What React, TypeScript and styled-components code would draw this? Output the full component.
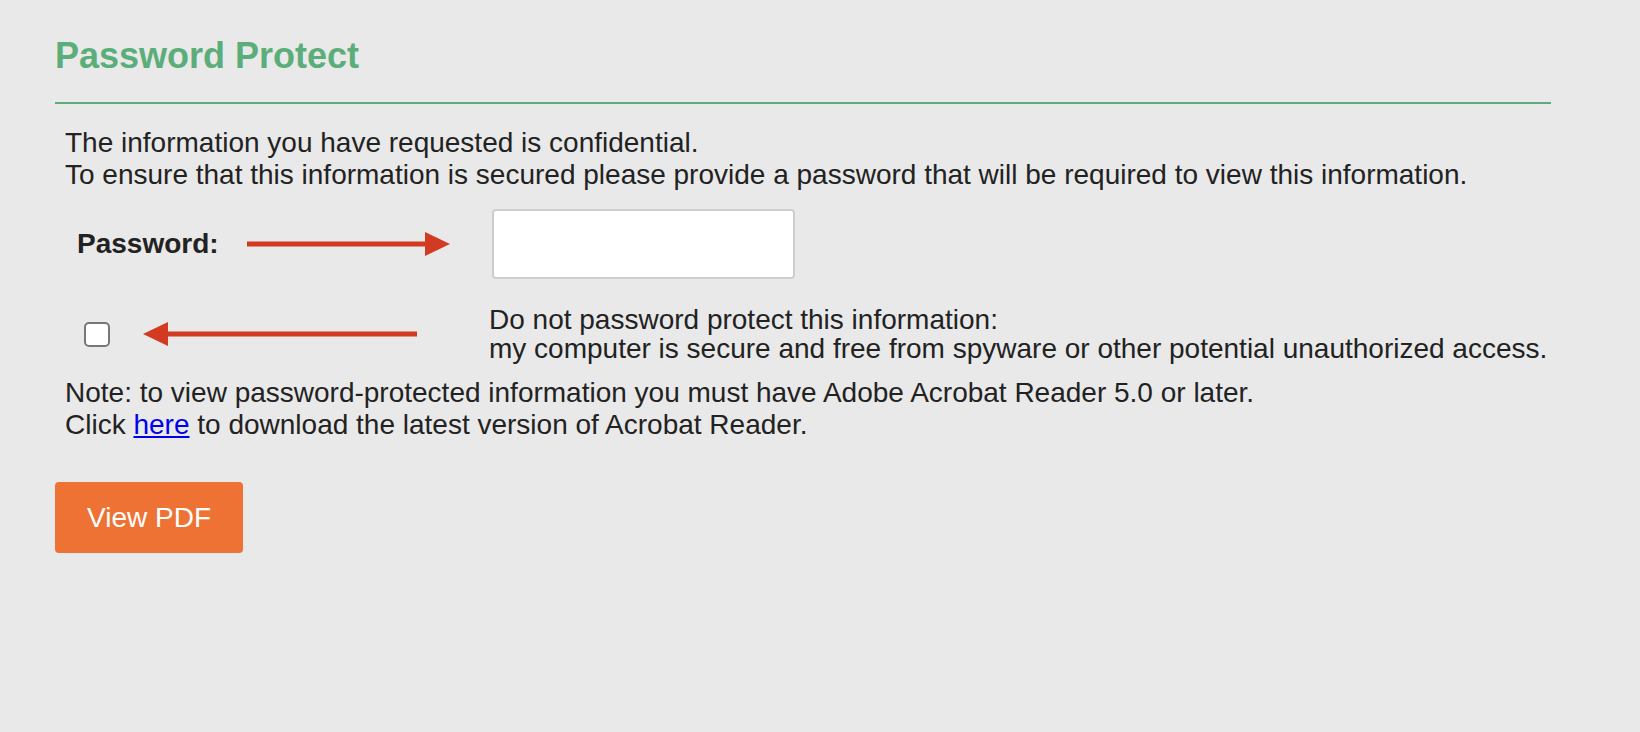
import React, { useState } from 'react'
import styled, { createGlobalStyle } from 'styled-components'

const GlobalStyle = createGlobalStyle`
	html, body {
		margin: 0;
		padding: 0;
		background: #e9e9e9;
	}
	body {
		font-family: "Liberation Sans", Arial, Helvetica, sans-serif;
		color: #222;
	}
`

const Page = styled.div`
	width: 1551px;
	padding: 0 0 40px 55px;
	min-height: 732px;
	box-sizing: border-box;
`

const Header = styled.div`
	padding: 34px 0 25px;
	border-bottom: 2px solid #5bae7a;
`

const Title = styled.h1`
	margin: 0;
	font-size: 36px;
	line-height: 43px;
	font-weight: 700;
	color: #5bae7a;
`

const Text = styled.p<{ top: number }>`
	margin: ${p => p.top}px 0 0 10px;
	font-size: 28px;
	line-height: 32px;
`

const Form = styled.div`
	margin-top: 18px;
	display: grid;
	grid-template-columns: 435px 1fr;
	row-gap: 26px;
	align-items: center;
`

const Cell = styled.div<{ indent: number }>`
	display: flex;
	align-items: center;
	padding-left: ${p => p.indent}px;
`

const Label = styled.label`
	width: 170px;
	font-size: 28px;
	font-weight: 700;
	line-height: 32px;
`

const PasswordInput = styled.input`
	width: 303px;
	height: 70px;
	margin-left: 2px;
	box-sizing: border-box;
	border: 2px solid #cdcdcd;
	border-radius: 4px;
	background: #fff;
	font-size: 28px;
	padding: 0 10px;
	outline: none;
`

const Check = styled.input`
	appearance: none;
	margin: 0 33px 0 0;
	width: 26px;
	height: 25px;
	box-sizing: border-box;
	border: 2px solid #777;
	border-radius: 5px;
	background: #fff;
	cursor: pointer;

	&:checked {
		background: #0075ff;
		border-color: #0075ff;
	}
`

const CheckText = styled.label`
	font-size: 28px;
	line-height: 29px;
	margin-left: -1px;
	white-space: nowrap;
`

const Link = styled.a`
	color: #0000ee;
	text-decoration: underline;
`

const Button = styled.button`
	margin-top: 41px;
	width: 188px;
	height: 71px;
	border: none;
	border-radius: 4px;
	background: #ee7233;
	color: #fff;
	font-family: inherit;
	font-size: 28px;
	cursor: pointer;
`

function Arrow(props: { width: number, left?: boolean }) {
	const w = props.width
	const head = 25
	return <svg width={w} height={26} viewBox={`0 0 ${w} 26`}>
		{props.left
			? <>
				<rect x={head - 2} y={10.5} width={w - head + 2} height={5} fill="#d23b22"/>
				<polygon points={`0,13 ${head},1 ${head},25`} fill="#d23b22"/>
			</>
			: <>
				<rect x={0} y={10.5} width={w - head + 2} height={5} fill="#d23b22"/>
				<polygon points={`${w},13 ${w - head},1 ${w - head},25`} fill="#d23b22"/>
			</>}
	</svg>
}

export default function App() {
	const [ noPassword, setNoPassword ] = useState(false)

	return <Page>
		<GlobalStyle/>
		<Header>
			<Title>Password Protect</Title>
		</Header>
		<Text top={23}>
			The information you have requested is confidential.<br/>
			To ensure that this information is secured please provide a password that will be required to view this information.
		</Text>
		<Form>
			<Cell indent={22}>
				<Label htmlFor="pdf-password">Password:</Label>
				<Arrow width={203}/>
			</Cell>
			<div>
				<PasswordInput id="pdf-password" type="password"/>
			</div>
			<Cell indent={29}>
				<Check id="no-password" type="checkbox" checked={noPassword} onChange={e => setNoPassword(e.target.checked)}/>
				<Arrow width={274} left/>
			</Cell>
			<CheckText htmlFor="no-password">
				Do not password protect this information:<br/>
				my computer is secure and free from spyware or other potential unauthorized access.
			</CheckText>
		</Form>
		<Text top={14}>
			Note: to view password-protected information you must have Adobe Acrobat Reader 5.0 or later.<br/>
			Click <Link href="#">here</Link> to download the latest version of Acrobat Reader.
		</Text>
		<Button type="button">View PDF</Button>
	</Page>
}
